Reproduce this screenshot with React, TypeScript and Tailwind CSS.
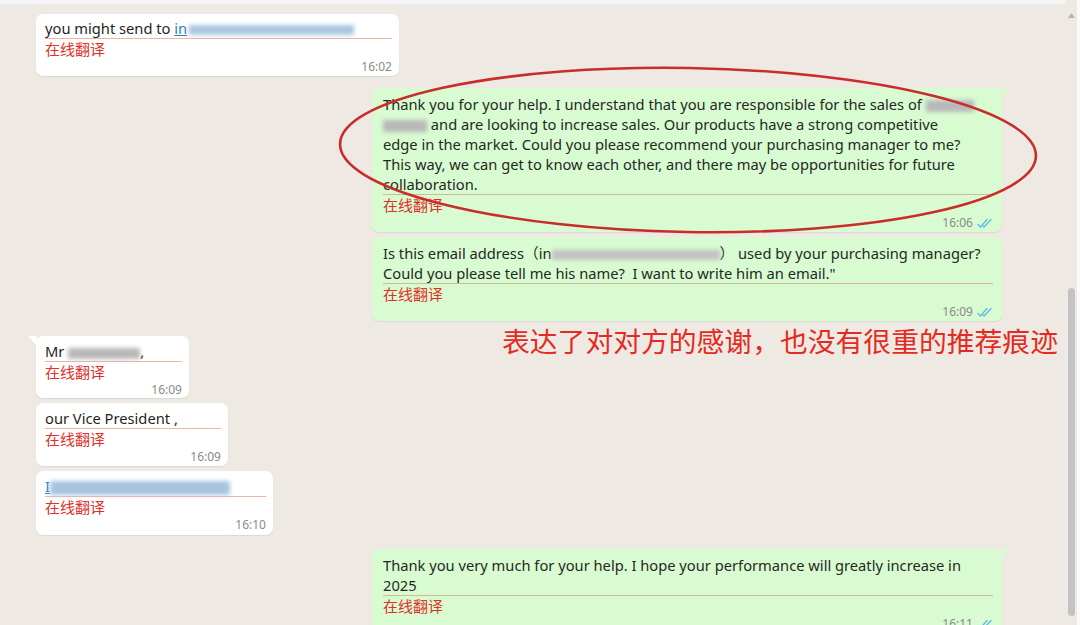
import React from "react"

const FONT = { fontFamily: '"Noto Sans", "Noto Sans CJK SC", sans-serif' }

function Blur({ w, h = 12, color = "#b8b8b8", className = "" }: { w: number; h?: number; color?: string; className?: string }) {
  return (
    <span
      className={"inline-block align-middle blur-[2px] " + className}
      style={{ width: w, height: h, background: color }}
    />
  )
}

function Ticks() {
  return (
    <svg width="16" height="11" viewBox="0 0 16 11" className="ml-1 inline-block">
      <path d="M1 6.5 L3.5 9 L10 1.5" fill="none" stroke="#5fb7e8" strokeWidth="1.3" strokeLinecap="round" />
      <path d="M6 8 L7 9 L14 1.5" fill="none" stroke="#5fb7e8" strokeWidth="1.3" strokeLinecap="round" />
    </svg>
  )
}

function Translate() {
  return <div className="h-[20px] leading-[20px] text-[15px] text-[#e0302a]" style={{ fontFamily: '"Noto Sans CJK SC", sans-serif' }}>在线翻译</div>
}

function Incoming({ width, time, tail, extra = "pt-[5px]", children }: { width: number; time: string; tail?: boolean; extra?: string; children: React.ReactNode }) {
  return (
    <div className={"relative ml-[36px] rounded-[7px] bg-white pl-[9px] pr-[7px] shadow-[0_1px_1px_rgba(0,0,0,0.08)] " + extra} style={{ width }}>
      {tail && (
        <svg width="9" height="10" viewBox="0 0 9 10" className="absolute -left-[8px] top-0">
          <path d="M9 0 L1 0 Q0 0 1 1.2 L9 10 Z" fill="#ffffff" />
        </svg>
      )}
      <div className="h-[21px] leading-[20px] text-[14.7px] text-[#1f1f1f] whitespace-nowrap border-b border-[#efb4a8]">{children}</div>
      <Translate />
      <div className="h-[16px] text-right text-[12px] leading-[16px] text-[#8a8a8a]">{time}</div>
    </div>
  )
}

function Outgoing({ time, tail, lines }: { time: string; tail?: boolean; lines: React.ReactNode[] }) {
  return (
    <div className="relative ml-[372px] w-[630px] shrink-0 rounded-[7px] bg-[#d9fbd2] pt-[6px] pl-[11px] pr-[9px] shadow-[0_1px_1px_rgba(0,0,0,0.08)]">
      {tail && (
        <svg width="9" height="10" viewBox="0 0 9 10" className="absolute -right-[8px] top-0">
          <path d="M0 0 L8 0 Q9 0 8 1.2 L0 10 Z" fill="#d9fbd2" />
        </svg>
      )}
      <div className="border-b border-[#d3b89a] text-[14.7px] leading-[20px] text-[#1f2a1f]">
        {lines.map((l, i) => (
          <div key={i} className="h-[20px] whitespace-nowrap">{l}</div>
        ))}
      </div>
      <Translate />
      <div className="flex h-[17px] items-center justify-end pb-[1px] text-[12px] text-[#8a8a8a]">
        {time}
        <Ticks />
      </div>
    </div>
  )
}

export default function App() {
  return (
    <div className="relative flex h-[625px] w-[1080px] overflow-hidden bg-[#eeeae3]" style={FONT}>
      <div className="flex flex-1 flex-col">
        <div className="h-[4px] shrink-0 bg-[#f4f4f6]" />
        <div className="flex flex-col pt-[10px]">
          <Incoming width={363} time="16:02" extra="pt-[4px] pb-[1px]">
            you might send to <span className="text-[#2a7fc1] underline">in</span>
            <Blur w={165} h={10} color="#a9c6de" className="ml-[2px]" />
          </Incoming>

          <div className="h-[12px] shrink-0" />
          <Outgoing
            time="16:06"
            tail
            lines={[
              <>Thank you for your help. I understand that you are responsible for the sales of <Blur w={48} /></>,
              <><Blur w={44} /> and are looking to increase sales. Our products have a strong competitive</>,
              <>edge in the market. Could you please recommend your purchasing manager to me?</>,
              <>This way, we can get to know each other, and there may be opportunities for future</>,
              <>collaboration.</>,
            ]}
          />
          <div className="h-[5px] shrink-0" />
          <Outgoing
            time="16:09"
            lines={[
              <>Is this email address（in<Blur w={168} h={10} color="#c2c2c2" />） used by your purchasing manager?</>,
              <>Could you please tell me his name?&nbsp; I want to write him an email."</>,
            ]}
          />

          <div className="h-[15px] shrink-0" />
          <Incoming width={153} time="16:09" tail>
            Mr <Blur w={72} h={11} />,
          </Incoming>
          <div className="h-[5px] shrink-0" />
          <Incoming width={192} time="16:09" extra="pt-[5px] pb-[1px]">our Vice President ,</Incoming>
          <div className="h-[5px] shrink-0" />
          <Incoming width={237} time="16:10" extra="pt-[5px] pb-[2px]">
            <span className="text-[#2a7fc1] underline">I</span>
            <Blur w={180} h={14} color="#a7c4e0" />
          </Incoming>

          <div className="h-[14px] shrink-0" />
          <Outgoing
            time="16:11"
            tail
            lines={[
              <>Thank you very much for your help. I hope your performance will greatly increase in</>,
              <>2025</>,
            ]}
          />
        </div>
      </div>

      <div className="flex w-[11px] shrink-0 flex-col items-center bg-[#eeeae3] pt-[13px]">
        <svg width="7" height="5" viewBox="0 0 7 5">
          <path d="M0 5 L3.5 0 L7 5 Z" fill="#b5b5b5" />
        </svg>
        <div className="mt-[270px] h-[328px] w-[7px] rounded-full bg-[#c3c3c3]" />
      </div>
      <div className="w-[3px] shrink-0 bg-[#fafafa]" />

      <div className="absolute left-[502px] top-[326px] text-[27.8px] leading-[28px] text-[#e42a22]" style={{ fontFamily: '"Noto Sans CJK SC", sans-serif' }}>
        表达了对对方的感谢，也没有很重的推荐痕迹
      </div>

      <svg className="pointer-events-none absolute left-0 top-0" width="1080" height="625">
        <ellipse cx="688" cy="150" rx="348" ry="82" transform="rotate(1 688 150)" fill="none" stroke="#c92d29" strokeWidth="2.6" />
      </svg>
    </div>
  )
}
